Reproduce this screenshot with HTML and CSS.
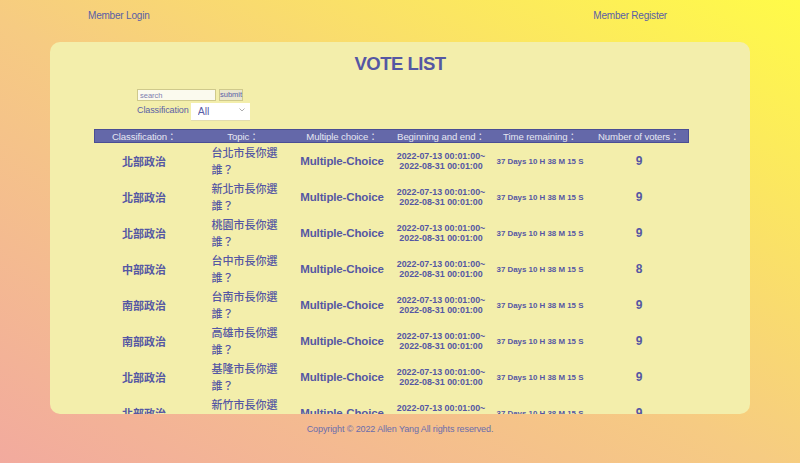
FILE: index.html
```html
<!DOCTYPE html>
<html lang="zh-Hant">
<head>
<meta charset="utf-8">
<title>VOTE LIST</title>
<link rel="stylesheet" href="styles.css">
</head>
<body>
<header class="topnav">
  <a class="navlink" href="#">Member Login</a>
  <a class="navlink" href="#">Member Register</a>
</header>
<main class="card">
  <h1 class="title">VOTE LIST</h1>
  <form class="filters">
    <div class="search-row">
      <input class="search" type="text" placeholder="search">
      <button class="submit" type="button">submit</button>
    </div>
    <div class="class-row">
      <label class="class-label">Classification</label>
      <span class="select-wrap">
        <select class="select"><option>All</option></select>
        <svg class="chev" width="6" height="4" viewBox="0 0 6 4"><path d="M0.5 0.5 L3 3 L5.5 0.5" fill="none" stroke="#9a9a9a" stroke-width="0.8"/></svg>
      </span>
    </div>
  </form>
  <table class="votes">
    <thead>
      <tr>
        <th>Classification：</th>
        <th>Topic：</th>
        <th>Multiple choice：</th>
        <th>Beginning and end：</th>
        <th>Time remaining：</th>
        <th>Number of voters：</th>
      </tr>
    </thead>
    <tbody>
      <tr><td class="cls">北部政治</td><td class="topic"><div>台北市長你選誰？</div></td><td class="mc">Multiple-Choice</td><td class="date">2022-07-13 00:01:00~<br>2022-08-31 00:01:00</td><td class="remain">37 Days 10 H 38 M 15 S</td><td class="num">9</td></tr>
      <tr><td class="cls">北部政治</td><td class="topic"><div>新北市長你選誰？</div></td><td class="mc">Multiple-Choice</td><td class="date">2022-07-13 00:01:00~<br>2022-08-31 00:01:00</td><td class="remain">37 Days 10 H 38 M 15 S</td><td class="num">9</td></tr>
      <tr><td class="cls">北部政治</td><td class="topic"><div>桃園市長你選誰？</div></td><td class="mc">Multiple-Choice</td><td class="date">2022-07-13 00:01:00~<br>2022-08-31 00:01:00</td><td class="remain">37 Days 10 H 38 M 15 S</td><td class="num">9</td></tr>
      <tr><td class="cls">中部政治</td><td class="topic"><div>台中市長你選誰？</div></td><td class="mc">Multiple-Choice</td><td class="date">2022-07-13 00:01:00~<br>2022-08-31 00:01:00</td><td class="remain">37 Days 10 H 38 M 15 S</td><td class="num">8</td></tr>
      <tr><td class="cls">南部政治</td><td class="topic"><div>台南市長你選誰？</div></td><td class="mc">Multiple-Choice</td><td class="date">2022-07-13 00:01:00~<br>2022-08-31 00:01:00</td><td class="remain">37 Days 10 H 38 M 15 S</td><td class="num">9</td></tr>
      <tr><td class="cls">南部政治</td><td class="topic"><div>高雄市長你選誰？</div></td><td class="mc">Multiple-Choice</td><td class="date">2022-07-13 00:01:00~<br>2022-08-31 00:01:00</td><td class="remain">37 Days 10 H 38 M 15 S</td><td class="num">9</td></tr>
      <tr><td class="cls">北部政治</td><td class="topic"><div>基隆市長你選誰？</div></td><td class="mc">Multiple-Choice</td><td class="date">2022-07-13 00:01:00~<br>2022-08-31 00:01:00</td><td class="remain">37 Days 10 H 38 M 15 S</td><td class="num">9</td></tr>
      <tr><td class="cls">北部政治</td><td class="topic"><div>新竹市長你選誰？</div></td><td class="mc">Multiple-Choice</td><td class="date">2022-07-13 00:01:00~<br>2022-08-31 00:01:00</td><td class="remain">37 Days 10 H 38 M 15 S</td><td class="num">9</td></tr>
    </tbody>
  </table>
</main>
<footer class="footer">Copyright © 2022 Allen Yang All rights reserved.</footer>
</body>
</html>
```
FILE: styles.css
```css
html, body {
  margin: 0;
  padding: 0;
}
body {
  width: 800px;
  height: 463px;
  overflow: hidden;
  font-family: "Liberation Sans", Arial, "Noto Sans CJK TC", sans-serif;
  color: #5a5ea6;
  background: linear-gradient(to top right, #f2aa9e 0%, #f6cb82 48%, #fffb48 100%);
}
.topnav {
  display: flex;
  justify-content: space-between;
  height: 30px;
  align-items: center;
  padding: 0 133px 0 88px;
}
.navlink {
  color: #5a5ea6;
  text-decoration: none;
  font-size: 10px;
  letter-spacing: -0.2px;
}
.card {
  display: block;
  width: 700px;
  height: 372px;
  margin: 12px auto 0;
  background: #f3eeab;
  border-radius: 10px;
  overflow: hidden;
  box-sizing: border-box;
  padding-top: 12px;
}
.title {
  margin: 0;
  text-align: center;
  font-size: 18.5px;
  letter-spacing: -0.5px;
  line-height: 20px;
  font-weight: bold;
  color: #5557a3;
}
.filters {
  margin: 15px 0 0 87px;
}
.search-row {
  display: flex;
  gap: 3px;
  height: 12px;
}
.search {
  box-sizing: border-box;
  width: 79px;
  height: 12px;
  margin: 0;
  padding: 0 2px;
  border: 1px solid #cfc98c;
  background: #fbfaee;
  font-family: "Liberation Sans", Arial, sans-serif;
  font-size: 7.5px;
  color: #5a5ea6;
  outline: none;
}
.search::placeholder {
  color: #7e80b0;
}
.submit {
  box-sizing: border-box;
  width: 24px;
  height: 12px;
  margin: 0;
  padding: 0;
  border: 1px solid #cfc98c;
  background: #e9e6cf;
  font-family: "Liberation Sans", Arial, sans-serif;
  font-size: 7.5px;
  color: #5a5ea6;
  line-height: 10px;
}
.class-row {
  display: flex;
  align-items: center;
  height: 18px;
  gap: 2px;
}
.class-label {
  font-size: 9px;
  letter-spacing: -0.1px;
}
.select-wrap {
  position: relative;
  display: inline-block;
  width: 59px;
  height: 18px;
}
.select {
  -webkit-appearance: none;
  appearance: none;
  box-sizing: border-box;
  width: 59px;
  height: 18px;
  margin: 0;
  padding: 0 0 0 7px;
  border: none;
  border-bottom: 1px solid #e2dcb0;
  border-radius: 0;
  background: #ffffff;
  font-family: "Liberation Sans", Arial, sans-serif;
  font-size: 10.5px;
  color: #5a5ea6;
}
.chev {
  position: absolute;
  right: 5px;
  top: 7px;
}
.votes {
  margin: 10px 0 0 44px;
  width: 595px;
  table-layout: fixed;
  border-collapse: collapse;
  border-spacing: 0;
}
.votes thead tr {
  background: #6468a9;
  border: 1px solid #4a4e94;
}
.votes th {
  height: 12px;
  padding: 0;
  font-weight: normal;
  font-size: 9.6px;
  letter-spacing: -0.1px;
  line-height: 11px;
  color: #e6e7f2;
  text-align: center;
}
.votes td {
  height: 36px;
  padding: 0;
  text-align: center;
  vertical-align: middle;
  color: #5557a3;
}
.cls {
  font-family: "Noto Sans CJK TC", sans-serif;
  font-size: 11px;
  font-weight: bold;
}
.votes td.topic {
  text-align: left;
  padding-left: 18px;
}
.topic div {
  width: 68px;
  font-family: "Noto Sans CJK TC", sans-serif;
  font-size: 11px;
  line-height: 17px;
  font-weight: 500;
}
.mc {
  font-size: 11.5px;
  letter-spacing: -0.15px;
  font-weight: bold;
}
.date {
  font-size: 8.9px;
  line-height: 10.5px;
  font-weight: bold;
}
.remain {
  font-size: 7.9px;
  font-weight: bold;
}
.num {
  font-size: 12px;
  font-weight: bold;
}
.footer {
  margin-top: 9px;
  text-align: center;
  font-size: 9px;
  letter-spacing: -0.1px;
  line-height: 12px;
  color: #6a6dac;
}
```
